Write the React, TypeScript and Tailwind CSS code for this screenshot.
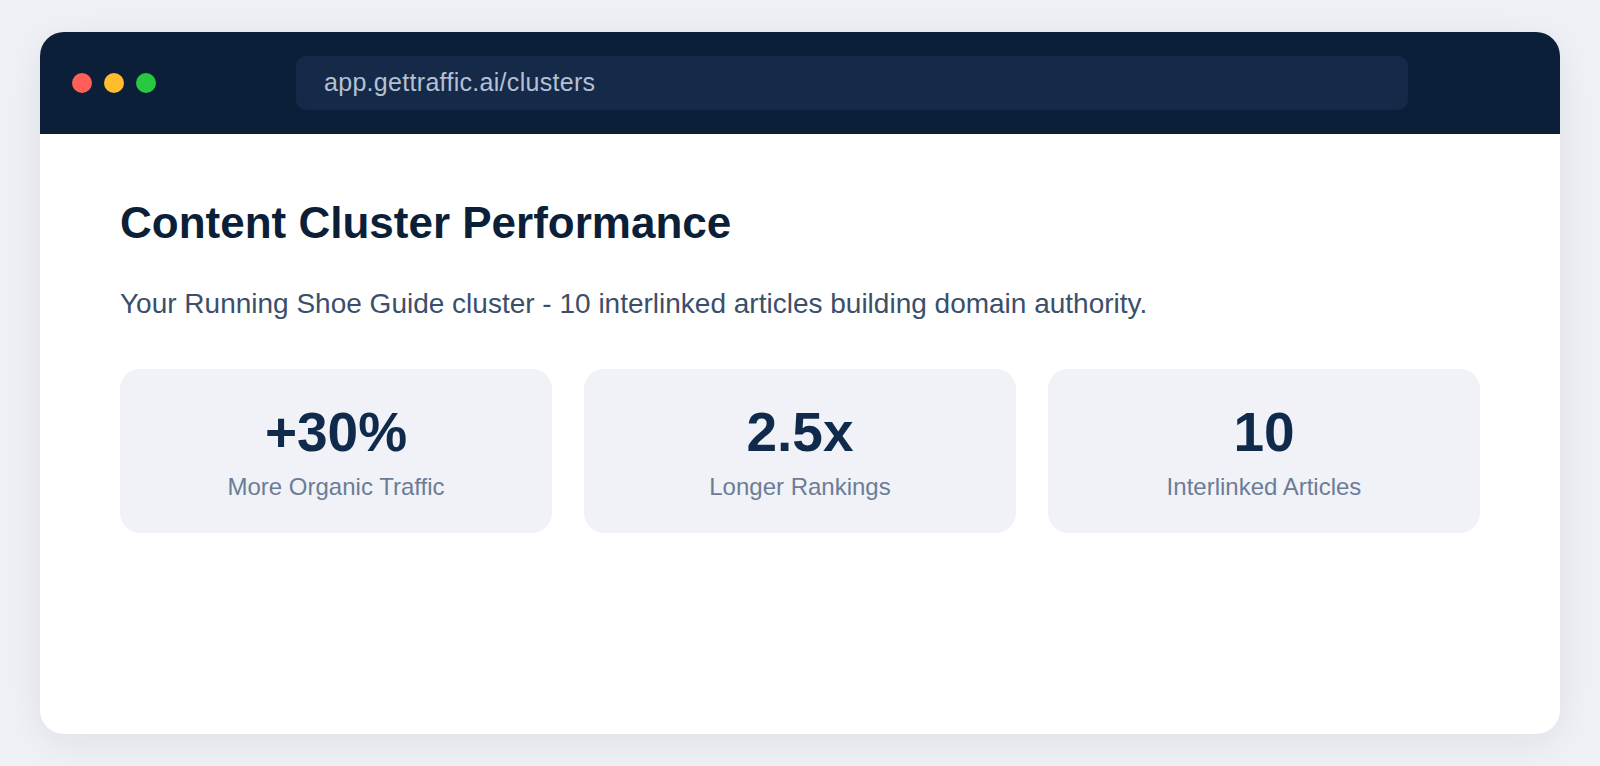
const stats = [
  { value: "+30%", label: "More Organic Traffic" },
  { value: "2.5x", label: "Longer Rankings" },
  { value: "10", label: "Interlinked Articles" },
];

function StatCard({ value, label }: { value: string; label: string }) {
  return (
    <div className="flex flex-col items-center rounded-[20px] bg-[#f0f2f7] pt-[36px] pb-[30px]">
      <div className="text-[55px] font-bold leading-none text-[#0f2a4b]">{value}</div>
      <div className="mt-[11px] text-[24px] leading-[32px] text-[#6b7d96]">{label}</div>
    </div>
  );
}

export default function App() {
  return (
    <div
      className="min-h-[766px] bg-[#f0f1f6] px-[40px] py-[32px]"
      style={{ fontFamily: '"Liberation Sans", Arial, sans-serif' }}
    >
      <div className="flex h-[702px] flex-col overflow-hidden rounded-[24px] bg-white shadow-[0_8px_40px_rgba(15,23,42,0.08)]">
        <div className="flex h-[102px] shrink-0 items-center bg-[#0b1f38] px-[32px]">
          <div className="flex gap-[12px]">
            <span className="h-[20px] w-[20px] rounded-full bg-[#ff5f57]" />
            <span className="h-[20px] w-[20px] rounded-full bg-[#febc2e]" />
            <span className="h-[20px] w-[20px] rounded-full bg-[#28c840]" />
          </div>
          <div className="ml-[140px] flex h-[54px] w-[1112px] items-center rounded-[10px] bg-[#142a48] px-[28px] text-[25px] tracking-[0.3px] text-[#b4c0d3]">
            app.gettraffic.ai/clusters
          </div>
        </div>
        <div className="px-[80px] pt-[61px]">
          <h1 className="text-[44px] font-bold leading-[56px] text-[#0c1f38]">
            Content Cluster Performance
          </h1>
          <p className="mt-[32px] text-[28px] leading-[42px] text-[#3b4f6b]">
            Your Running Shoe Guide cluster - 10 interlinked articles building domain authority.
          </p>
          <div className="mt-[44px] grid grid-cols-3 gap-[32px]">
            {stats.map((s) => (
              <StatCard key={s.label} value={s.value} label={s.label} />
            ))}
          </div>
        </div>
      </div>
    </div>
  );
}
